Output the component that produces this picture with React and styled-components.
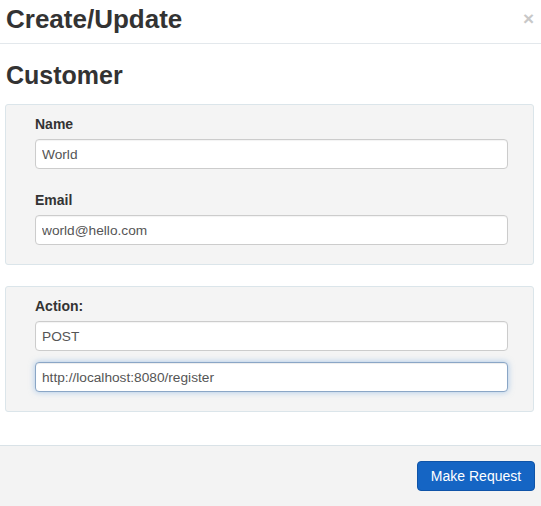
import React from "react";
import styled, { createGlobalStyle } from "styled-components";

const GlobalStyle = createGlobalStyle`
  html, body {
    margin: 0;
    padding: 0;
    background: #ffffff;
  }
  body {
    font-family: "Liberation Sans", Arial, sans-serif;
    color: #333333;
  }
  * {
    box-sizing: border-box;
  }
`;

const App = () => {
  return (
    <>
      <GlobalStyle />
      <ModalWrapper>
        <ModalHeader>
          <ModalTitle>Create/Update</ModalTitle>
          <CloseButton aria-label="close">×</CloseButton>
        </ModalHeader>
        <ModalBody>
          <SectionTitle>Customer</SectionTitle>
          <Panel>
            <FieldGroup>
              <Label>Name</Label>
              <TextInput defaultValue="World" />
            </FieldGroup>
            <FieldGroup>
              <Label>Email</Label>
              <TextInput defaultValue="world@hello.com" />
            </FieldGroup>
          </Panel>
          <Panel $gap={11}>
            <Label>Action:</Label>
            <TextInput defaultValue="POST" />
            <TextInput $focused defaultValue="http://localhost:8080/register" />
          </Panel>
        </ModalBody>
        <ModalFooter>
          <PrimaryButton type="button">Make Request</PrimaryButton>
        </ModalFooter>
      </ModalWrapper>
    </>
  );
};

const ModalWrapper = styled.div`
  width: 541px;
  height: 506px;
  display: flex;
  flex-direction: column;
  background: #ffffff;
`;

const ModalHeader = styled.div`
  height: 44px;
  padding: 5px 7px 0 6px;
  display: flex;
  flex-direction: row;
  align-items: flex-start;
  justify-content: space-between;
  border-bottom: 1px solid #e3e8ec;
`;

const ModalTitle = styled.h2`
  margin: 0;
  font-size: 26px;
  line-height: 28px;
  font-weight: 700;
  color: #333333;
`;

const CloseButton = styled.span`
  margin-top: 1px;
  font-size: 19px;
  line-height: 26px;
  font-weight: 700;
  color: #c8c8c8;
  cursor: pointer;
`;

const ModalBody = styled.div`
  flex: 1;
  padding: 18px 7px 0 5px;
  display: flex;
  flex-direction: column;
  gap: 21px;
`;

const SectionTitle = styled.h3`
  margin: 0 0 -5px 1px;
  font-size: 25px;
  line-height: 26px;
  font-weight: 700;
  color: #333333;
`;

const Panel = styled.div`
  width: 100%;
  padding: 9px 25px 19px 29px;
  background: #f4f4f4;
  border: 1px solid #dbe5ea;
  border-radius: 3px;
  display: flex;
  flex-direction: column;
  gap: ${({ $gap }) => ($gap ? `${$gap}px` : "21px")};

  & > label {
    margin-bottom: -6px;
  }
`;

const FieldGroup = styled.div`
  display: flex;
  flex-direction: column;
  gap: 5px;
`;

const Label = styled.label`
  font-size: 14px;
  line-height: 20px;
  font-weight: 700;
  color: #333333;
`;

const TextInput = styled.input`
  width: 100%;
  height: 30px;
  padding: 0 6px;
  font-family: "Liberation Sans", Arial, sans-serif;
  font-size: 13.7px;
  color: #555555;
  background: #ffffff;
  border: 1px solid ${({ $focused }) => ($focused ? "#8aa6c6" : "#cccccc")};
  border-radius: 4px;
  outline: none;
  box-shadow: ${({ $focused }) =>
    $focused
      ? "inset 0 1px 1px rgba(0,0,0,.075), 0 0 6px rgba(102,160,220,.55)"
      : "inset 0 1px 1px rgba(0,0,0,.05)"};
`;

const ModalFooter = styled.div`
  height: 61px;
  padding: 15px 6px 0 0;
  display: flex;
  flex-direction: row;
  justify-content: flex-end;
  align-items: flex-start;
  background: #f3f3f3;
  border-top: 1px solid #d9e2e7;
`;

const PrimaryButton = styled.button`
  width: 118px;
  height: 30px;
  padding: 0;
  font-family: "Liberation Sans", Arial, sans-serif;
  font-size: 14px;
  color: #ffffff;
  background: #1565c4;
  border: 1px solid #0f54a8;
  border-radius: 4px;
  cursor: pointer;
`;

export default App;
